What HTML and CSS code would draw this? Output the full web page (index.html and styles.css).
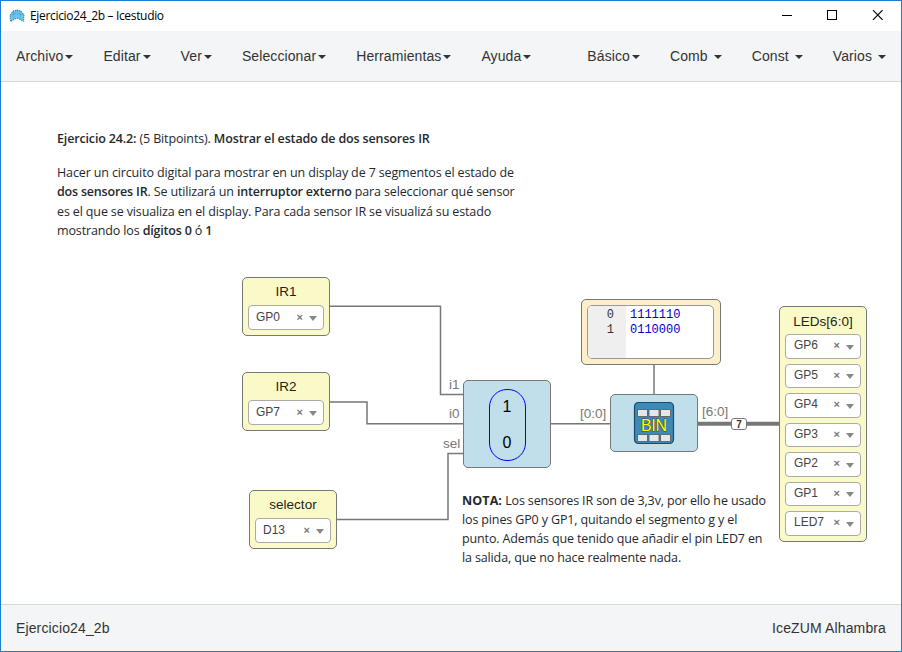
FILE: index.html
```html
<!DOCTYPE html>
<html lang="es">
<head>
<meta charset="utf-8">
<title>Ejercicio24_2b – Icestudio</title>
<link rel="stylesheet" href="styles.css">
</head>
<body>
<div class="window">
  <header class="titlebar">
    <svg class="logo" width="16" height="14" viewBox="0 0 16 14"><path d="M8 1 12 2 15 6 14.500 12.500 11 10.500 8 9 5 10.500 1.500 12.500 1 6 4 2Z" fill="#6cc5ee"/><path d="M8 1 12 2 15 6 14.500 12.500 11 10.500 8 9 5 10.500 1.500 12.500 1 6 4 2Z" fill="none" stroke="#27607d" stroke-width=".9" stroke-dasharray="1.200 1"/><path d="M4 2 5 10M12 2 11 10M1 6 5 5 8 1 11 5 15 6M5 5H11" fill="none" stroke="#3f9cc8" stroke-width=".5"/></svg>
    <span class="title">Ejercicio24_2b – Icestudio</span>
    <svg class="controls" width="104" height="12" viewBox="0 0 104 12" fill="none" stroke="#000"><path d="M1 5.500h10M46.500.500h9v9h-9z" shape-rendering="crispEdges"/><path d="M92 .200 101.600 9.800M101.600 .200 92 9.800" stroke-width="1.200"/></svg>
  </header>
  <nav class="menubar">
    <div class="menu"><span>Archivo<i class="caret"></i></span><span>Editar<i class="caret"></i></span><span>Ver<i class="caret"></i></span><span>Seleccionar<i class="caret"></i></span><span>Herramientas<i class="caret"></i></span><span>Ayuda<i class="caret"></i></span></div>
    <div class="menu"><span>Básico<i class="caret"></i></span><span>Comb <i class="caret"></i></span><span>Const <i class="caret"></i></span><span>Varios <i class="caret"></i></span></div>
  </nav>
  <main class="canvas">
    <svg class="wires" width="900" height="522" viewBox="1 82 900 522" fill="none" stroke="#777" stroke-width="1.500">
      <path d="M330 306.200H440.500V394.500H463"/>
      <path d="M330 402H367V423.800H463"/>
      <path d="M337 519.500H448V453.500H463"/>
      <path d="M551 423.800H610"/>
      <path d="M654 364V394"/>
      <path d="M698 423.800H779" stroke-width="4"/>
    </svg>
    <section class="note intro">
      <p class="heading"><b>Ejercicio 24.2:</b> (5 Bitpoints). <b>Mostrar el estado de dos sensores IR</b></p>
      <p>Hacer un circuito digital para mostrar en un display de 7 segmentos el estado de<br><b>dos sensores IR</b>. Se utilizará un <b>interruptor externo</b> para seleccionar qué sensor<br>es el que se visualiza en el display. Para cada sensor IR se visualizá su estado<br>mostrando los <b>dígitos 0</b> ó <b>1</b></p>
    </section>
    <section class="note nota">
      <p><b class="strong">NOTA:</b> Los sensores IR son de 3,3v, por ello he usado<br>los pines GP0 y GP1, quitando el segmento g y el<br>punto. Además que tenido que añadir el pin LED7 en<br>la salida, que no hace realmente nada.</p>
    </section>
    <div class="block io ir1"><h2>IR1</h2><div class="pin">GP0<i class="clear">×</i><i class="arrow"></i></div></div>
    <div class="block io ir2"><h2>IR2</h2><div class="pin">GP7<i class="clear">×</i><i class="arrow"></i></div></div>
    <div class="block io selector"><h2>selector</h2><div class="pin">D13<i class="clear">×</i><i class="arrow"></i></div></div>
    <div class="block io leds"><h2>LEDs[6:0]</h2>
      <div class="pin">GP6<i class="clear">×</i><i class="arrow"></i></div>
      <div class="pin">GP5<i class="clear">×</i><i class="arrow"></i></div>
      <div class="pin">GP4<i class="clear">×</i><i class="arrow"></i></div>
      <div class="pin">GP3<i class="clear">×</i><i class="arrow"></i></div>
      <div class="pin">GP2<i class="clear">×</i><i class="arrow"></i></div>
      <div class="pin">GP1<i class="clear">×</i><i class="arrow"></i></div>
      <div class="pin">LED7<i class="clear">×</i><i class="arrow"></i></div>
    </div>
    <div class="block mux"><div class="pill"><span>1</span><span>0</span></div></div>
    <div class="block memory"><div class="table"><div class="addr">0<br>1</div><div class="data">1111110<br>0110000</div></div></div>
    <div class="block bin">
      <svg width="42" height="44" viewBox="0 0 42 44"><rect x="1.500" y="1.500" width="39" height="41" rx="4" fill="#3b8ab8" stroke="#1d4a66" stroke-width="1.200"/><g fill="#e6e6e6" stroke="#555" stroke-width=".8"><path d="M4.500 8.500h10v7h-10zM16 8.500h10v7H16zM27.500 8.500h10v7h-10zM4.500 33.500h10v7h-10zM16 33.500h10v7H16zM27.500 33.500h10v7h-10z"/></g><text x="21" y="30" text-anchor="middle" textLength="26" class="binlabel">BIN</text></svg>
    </div>
    <span class="port p-i1">i1</span>
    <span class="port p-i0">i0</span>
    <span class="port p-sel">sel</span>
    <span class="port p-in">[0:0]</span>
    <span class="port p-out">[6:0]</span>
    <span class="bus">7</span>
  </main>
  <footer class="status"><span>Ejercicio24_2b</span><span>IceZUM Alhambra</span></footer>
</div>
</body>
</html>
```
FILE: styles.css
```css
* { box-sizing: border-box; }
body { margin: 0; font-family: "Liberation Sans", Arial, sans-serif; font-size: 14px; color: #333; }
.window { width: 902px; height: 652px; border: 1px solid #1a7fd4; background: #fff; display: flex; flex-direction: column; overflow: hidden; }
.titlebar { height: 30px; display: flex; align-items: center; padding: 0 16px 0 8px; flex: none; }
.title { font: 12px/16px "Open Sans", "Noto Sans", sans-serif; color: #000; margin-left: 5px; letter-spacing: -.33px; flex: 1; }
.menubar { height: 51px; flex: none; display: flex; justify-content: space-between; align-items: center; padding: 0 15px; background: #f4f5f7; border-bottom: 1px solid #d3d9dd; letter-spacing: .1px; }
.menu { display: flex; gap: 30px; white-space: pre; }
.caret { display: inline-block; margin-left: 2px; vertical-align: middle; border: 4px solid transparent; border-top-color: #333; border-bottom: 0; }
.canvas { position: relative; flex: 1; }
.wires { position: absolute; left: 0; top: 0; }
.status { height: 47px; flex: none; display: flex; justify-content: space-between; align-items: center; padding: 0 15px; background: #f4f5f7; border-top: 1px solid #d3d9dd; letter-spacing: .13px; }

.note { position: absolute; font: 12.5px/19.2px "Open Sans", "Noto Sans", sans-serif; color: #24292e; white-space: nowrap; letter-spacing: -.135px; }
.note p { margin: 0; }
.note .heading { margin-bottom: 15px; }
.note b { font-weight: 600; letter-spacing: -.2px; }
.note .heading b { letter-spacing: -.15px; }
.note .strong { font-weight: 700; letter-spacing: .1px; }
.intro { left: 56px; top: 47px; }
.nota { left: 461px; top: 408.5px; }

.block { position: absolute; border: 1px solid #777; border-radius: 5px; }
.io { width: 88px; background: #fafac8; display: flex; flex-direction: column; align-items: center; }
.io h2 { margin: 4px 0; font-size: 13.5px; line-height: 19px; font-weight: normal; color: #222; }
.pin { width: 76px; height: 24.5px; flex: none; margin-bottom: 5px; border: 1px solid #aaa; border-radius: 4px; background: #fff; display: flex; align-items: center; padding: 0 6px 1px 7px; font-size: 12px; color: #444; }
.clear { margin-left: auto; font: bold 11px/12px "Liberation Sans", sans-serif; color: #777; }
.arrow { margin: 4px 0 0 6px; border: 4px solid transparent; border-top: 5px solid #888; border-bottom: 0; }
.ir1 { left: 241px; top: 195px; height: 59px; }
.ir2 { left: 241px; top: 290px; height: 59px; }
.selector { left: 248px; top: 408px; height: 59px; }
.leds { left: 778px; top: 224px; height: 236px; }
.leds h2 { margin: 5px 0 3px; }
.leds .pin { padding: 0 6px 2px 8px; }
.mux { left: 462px; top: 298px; width: 88px; height: 88px; background: #c0dfeb; display: flex; justify-content: center; align-items: center; }
.pill { width: 37px; height: 72px; margin-top: 1px; border: 1.5px solid #00f; border-radius: 18px; display: flex; flex-direction: column; align-items: center; justify-content: space-between; padding: 8px 0 8px; color: #000; font-size: 16px; line-height: 18px; }
.memory { left: 580px; top: 217px; width: 140px; height: 66px; background: #fdefcb; padding: 5px; }
.table { width: 127px; height: 54px; border: 1px solid #999; border-radius: 5px; overflow: hidden; background: #fff; display: flex; font: 12px/15px "Liberation Mono", monospace; }
.addr { width: 38px; background: #efefef; color: #333; text-align: right; padding: 2px 12px 0 0; }
.data { padding: 2px 0 0 4px; color: #0000c8; }
.bin { left: 609px; top: 312px; width: 88px; height: 58px; background: #c0dfeb; display: flex; justify-content: center; align-items: center; }
.binlabel { font: 16px "Liberation Sans", sans-serif; fill: #ff0; paint-order: stroke; stroke: #444; stroke-width: 1px; }
.port { position: absolute; color: #777; font-size: 13.5px; line-height: 16px; }
.p-i1 { left: 448px; top: 295px; }
.p-i0 { left: 448px; top: 324px; }
.p-sel { left: 442px; top: 354px; }
.p-in { left: 579px; top: 324px; }
.p-out { left: 701px; top: 322px; }
.bus { position: absolute; left: 730px; top: 336px; width: 16px; height: 12px; border: 1px solid #777; border-radius: 3px; background: #fff; font-size: 10px; line-height: 11px; font-weight: bold; text-align: center; }
```
